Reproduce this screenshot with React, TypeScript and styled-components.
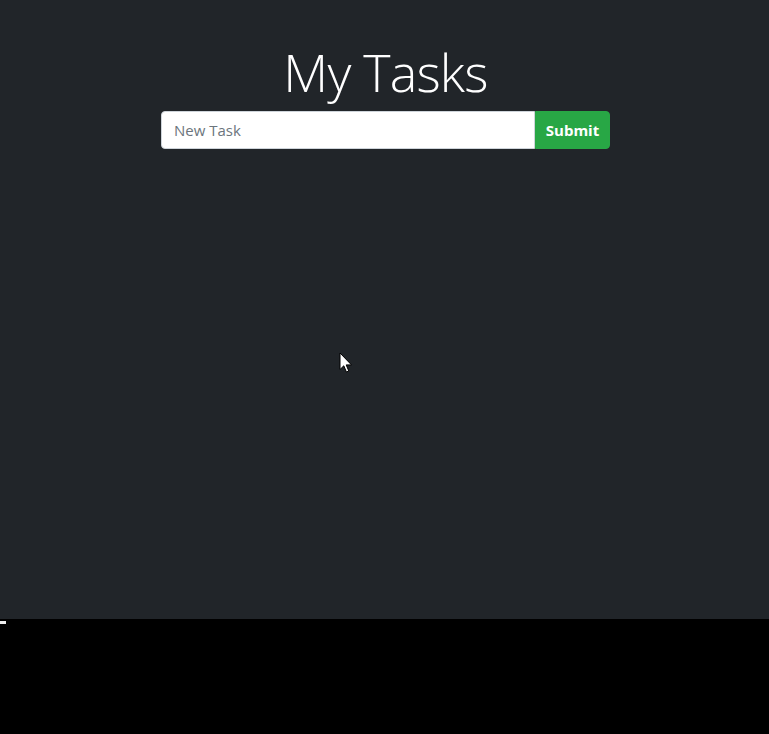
import React from "react";
import styled, { createGlobalStyle } from "styled-components";

const Global = createGlobalStyle`
  html, body { margin: 0; padding: 0; background: #000; }
  body { font-family: "Open Sans", "Noto Sans", sans-serif; }
  * { box-sizing: border-box; }
`;

const Page = styled.div`
  position: relative;
  width: 769px;
  height: 734px;
  background: #000;
`;

const Stage = styled.main`
  height: 619px;
  background: #212529;
  display: flex;
  flex-direction: column;
  align-items: center;
  padding-top: 40px;
  padding-left: 2px;
`;

const Title = styled.h1`
  margin: 0;
  font-family: "Open Sans", sans-serif;
  font-weight: 300;
  font-size: 52px;
  line-height: 64px;
  color: #fff;
  letter-spacing: -0.8px;
`;

const Form = styled.form`
  display: flex;
  width: 449px;
  margin-top: 7px;
`;

const Input = styled.input`
  flex: 1;
  height: 38px;
  padding: 6px 12px;
  font-family: "Open Sans", sans-serif;
  font-size: 15px;
  color: #495057;
  background: #fff;
  border: 1px solid #ced4da;
  border-radius: 4px 0 0 4px;
  outline: none;
  &::placeholder { color: #6c757d; }
`;

const Button = styled.button`
  width: 75px;
  height: 38px;
  background: #28a745;
  border: 1px solid #28a745;
  border-radius: 0 4px 4px 0;
  color: #fff;
  font-family: "Open Sans", sans-serif;
  font-weight: 700;
  font-size: 15px;
  padding: 0;
`;

const Mark = styled.div`
  width: 6px;
  height: 3px;
  margin-top: 2px;
  background: #eee;
`;

const Cursor = styled.svg`
  position: absolute;
  left: 339px;
  top: 352px;
`;

export default function App() {
  return (
    <Page>
      <Global />
      <Stage>
        <Title>My Tasks</Title>
        <Form onSubmit={(e) => e.preventDefault()}>
          <Input placeholder="New Task" />
          <Button type="submit">Submit</Button>
        </Form>
      </Stage>
      <Mark />
      <Cursor width="14" height="22" viewBox="0 0 14 22">
        <path d="M1 1 L1 17.5 L4.8 13.8 L7.4 20 L9.8 19 L7.2 12.9 L12.5 12.9 Z" fill="#fff" stroke="#000" strokeWidth="1" strokeLinejoin="miter" />
      </Cursor>
    </Page>
  );
}
